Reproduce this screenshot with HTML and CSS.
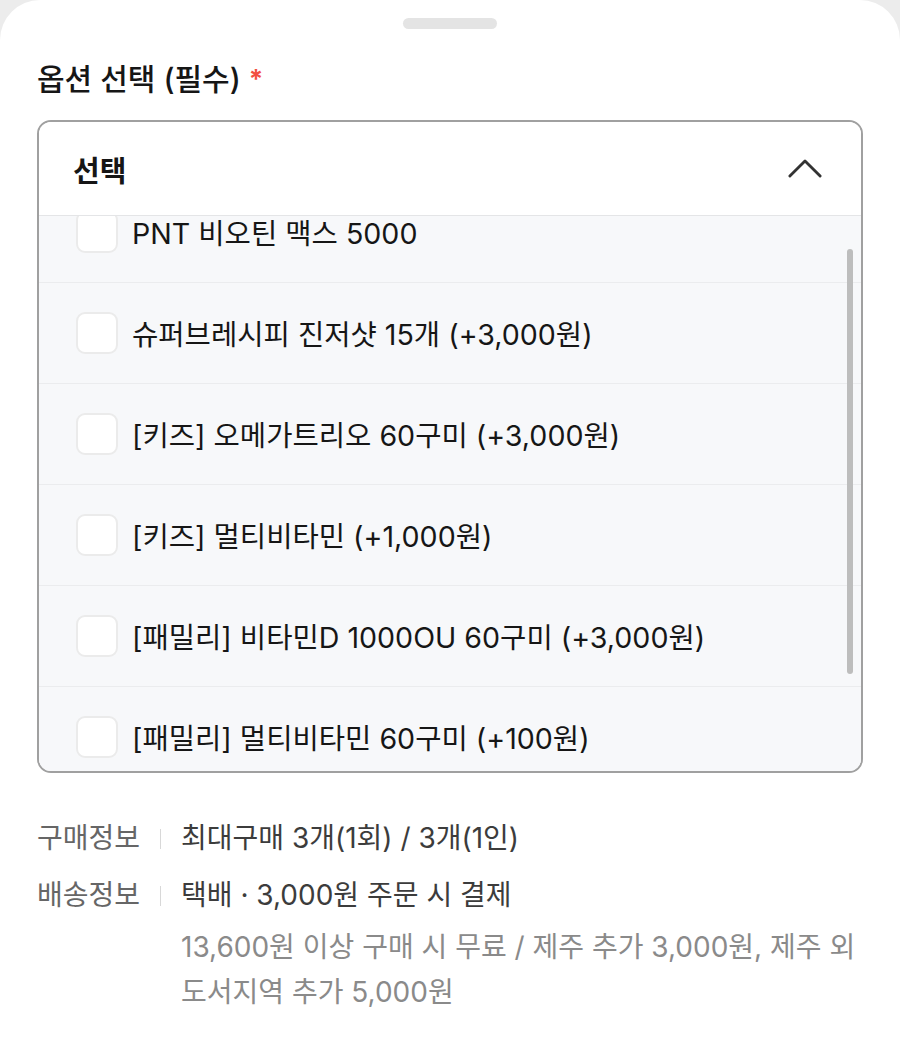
FILE: index.html
```html
<!DOCTYPE html>
<html lang="ko">
<head>
    <meta charset="UTF-8">
    <meta name="viewport" content="width=device-width, initial-scale=1.0">
    <title>옵션 선택</title>
    <link rel="stylesheet" href="styles.css">
</head>
<body>
    <div class="sheet">
        <div class="handle"></div>

        <h2 class="section-title">옵션 선택 (필수) <span class="required">*</span></h2>

        <div class="dropdown">
            <div class="dropdown-header">
                <span>선택</span>
                <svg class="chevron" width="36" height="22" viewBox="0 0 36 22">
                    <polyline points="2,19 18,3 34,19" fill="none" stroke="#333" stroke-width="3" stroke-linecap="round" stroke-linejoin="round"/>
                </svg>
            </div>

            <div class="option-list">
                <ul class="options">
                    <li><span class="checkbox"></span>PNT 비오틴 맥스 5000</li>
                    <li><span class="checkbox"></span>슈퍼브레시피 진저샷 15개 (+3,000원)</li>
                    <li><span class="checkbox"></span>[키즈] 오메가트리오 60구미 (+3,000원)</li>
                    <li><span class="checkbox"></span>[키즈] 멀티비타민 (+1,000원)</li>
                    <li><span class="checkbox"></span>[패밀리] 비타민D 1000OU 60구미 (+3,000원)</li>
                    <li><span class="checkbox"></span>[패밀리] 멀티비타민 60구미 (+100원)</li>
                </ul>
                <div class="scrollbar"></div>
            </div>
        </div>

        <div class="info">
            <div class="info-row">
                <span class="info-label">구매정보</span>
                <div class="info-value">
                    <p>최대구매 3개(1회) / 3개(1인)</p>
                </div>
            </div>
            <div class="info-row">
                <span class="info-label">배송정보</span>
                <div class="info-value">
                    <p>택배 · 3,000원 주문 시 결제</p>
                    <p class="info-note">13,600원 이상 구매 시 무료 / 제주 추가 3,000원, 제주 외 도서지역 추가 5,000원</p>
                </div>
            </div>
        </div>
    </div>
</body>
</html>
```

FILE: styles.css
```css
:root {
    --bg-page: #ececec;
    --sheet-bg: #ffffff;
    --list-bg: #f7f8fa;
    --text-primary: #161616;
    --text-label: #666666;
    --text-value: #3c3c3c;
    --text-note: #8a8a8a;
    --border-box: #a0a0a0;
    --border-light: #ebecee;
    --required: #f2503f;
}

* {
    box-sizing: border-box;
}

body {
    margin: 0;
    background-color: var(--bg-page);
    font-family: Inter, "Noto Sans CJK KR", sans-serif;
    color: var(--text-primary);
}

.sheet {
    min-height: 1038px;
    background-color: var(--sheet-bg);
    border-radius: 40px 40px 0 0;
    padding: 18px 37px 0 37px;
}

.handle {
    width: 94px;
    height: 11px;
    margin: 0 auto;
    background-color: #e4e4e4;
    border-radius: 6px;
}

.section-title {
    margin: 29px 0 20px 0;
    font-size: 30px;
    line-height: 42px;
    font-weight: 500;
}

.required {
    color: var(--required);
    font-size: 26px;
    font-weight: 700;
    vertical-align: 2px;
}

.dropdown {
    border: 2px solid var(--border-box);
    border-radius: 14px;
    overflow: hidden;
}

.dropdown-header {
    display: flex;
    align-items: center;
    justify-content: space-between;
    height: 94px;
    padding: 0 39px 0 34px;
    border-bottom: 1px solid #e4e5e7;
    background-color: var(--sheet-bg);
    font-size: 29px;
    font-weight: 700;
}

.chevron {
    width: 34px;
    height: 21px;
}

.option-list {
    position: relative;
    height: 555px;
    overflow: hidden;
    background-color: var(--list-bg);
}

.options {
    list-style: none;
    margin: -34px 0 0 0;
    padding: 0;
}

.options li {
    display: flex;
    align-items: center;
    gap: 14px;
    height: 101px;
    padding-left: 37px;
    padding-bottom: 2px;
    border-bottom: 1px solid var(--border-light);
    font-size: 28.6px;
}

.checkbox {
    flex: none;
    width: 42px;
    height: 42px;
    margin-top: 2px;
    background-color: #ffffff;
    border: 2px solid #ebebeb;
    border-radius: 9px;
}

.scrollbar {
    position: absolute;
    top: 33px;
    right: 8px;
    width: 6px;
    height: 425px;
    background-color: #bdbdbd;
    border-radius: 3px;
}

.info {
    margin-top: 43px;
    font-size: 28px;
    line-height: 45px;
}

.info-row {
    display: flex;
    margin-bottom: 12px;
}

.info-label {
    flex: none;
    width: 103px;
    color: var(--text-label);
    white-space: nowrap;
}

.info-value {
    flex: 1;
    position: relative;
    padding-left: 41px;
    color: var(--text-value);
}

.info-value::before {
    content: "";
    position: absolute;
    left: 20px;
    top: 13px;
    width: 1px;
    height: 20px;
    background-color: #d8d8d8;
}

.info-value p {
    margin: 0;
}

.info-value .info-note {
    margin-top: 7px;
    color: var(--text-note);
    word-break: keep-all;
}
```
